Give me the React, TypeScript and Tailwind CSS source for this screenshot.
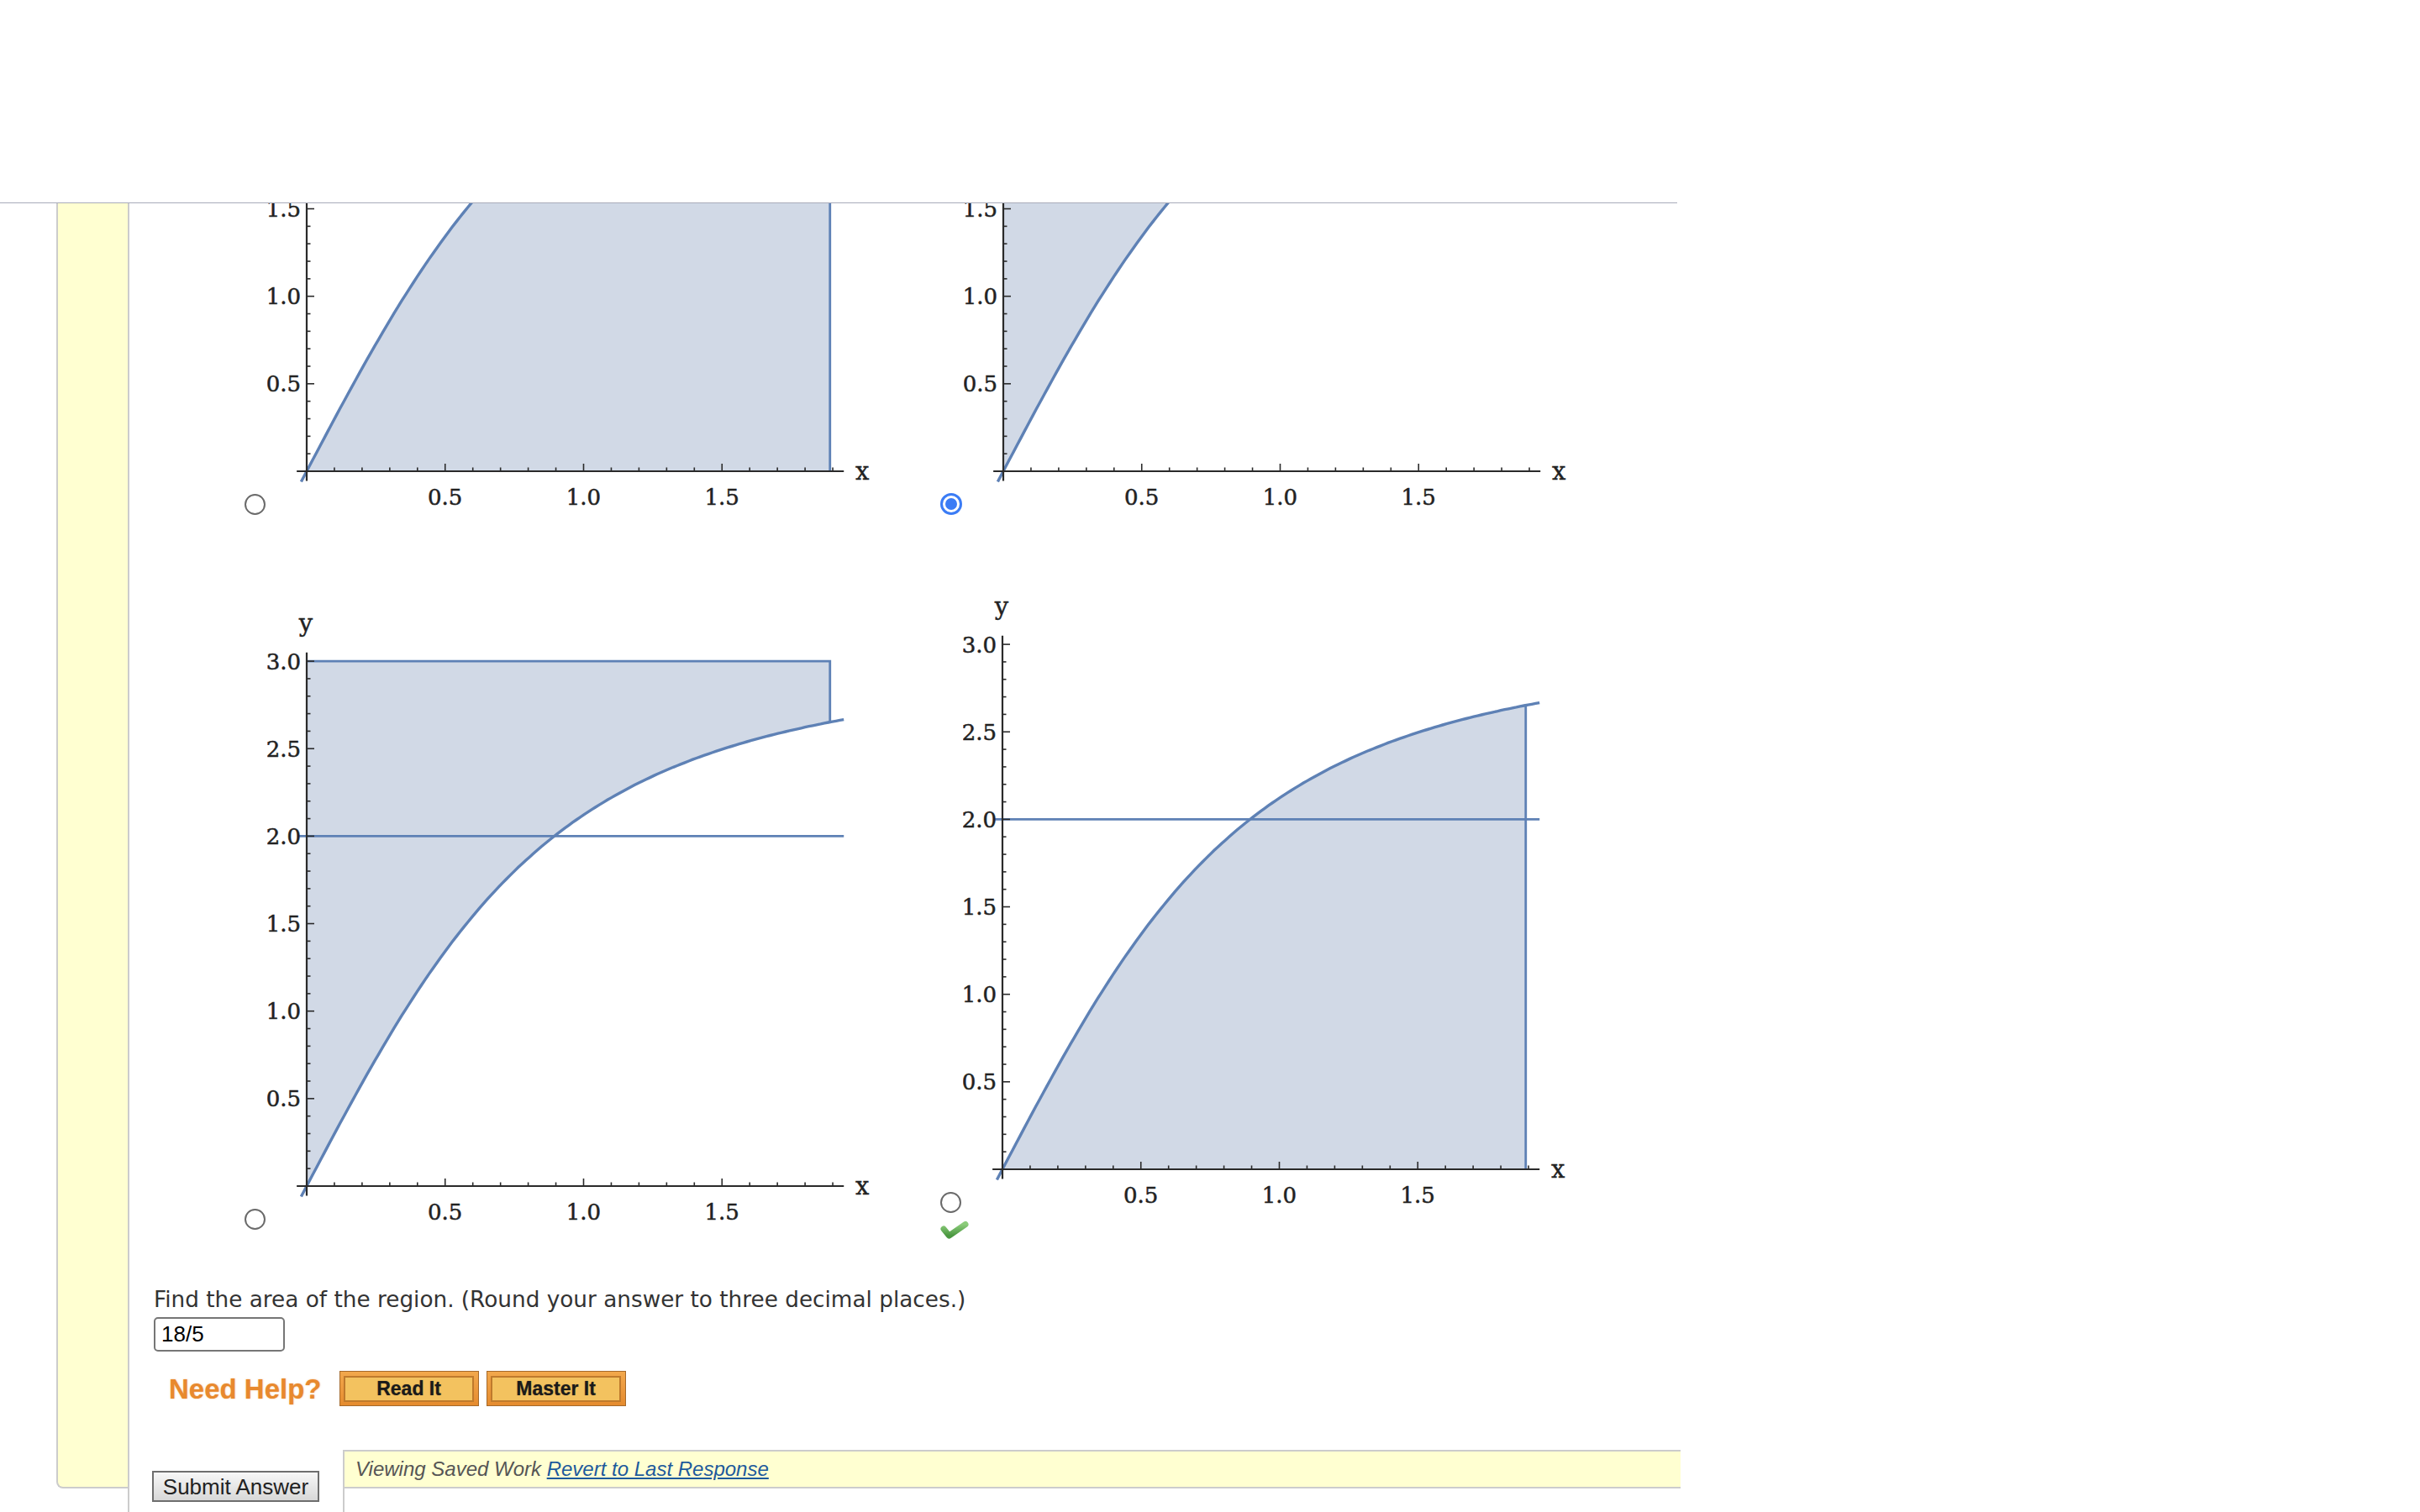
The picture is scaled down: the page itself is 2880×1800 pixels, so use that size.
import React from 'react';

// plot geometry, in image pixels
const W = 722;
const H = 748;
const OX = 47;
const OY = 696;
const UX = 329.5;
const UY = 208.3;
const XR = 1.89;
const BLUE = '#5e81b5';
const FILL = '#d1d9e6';

const f = (x: number) => (3 * x) / Math.sqrt(1 + x * x);
const px = (x: number) => OX + x * UX;
const py = (y: number) => OY - y * UY;

const curve = (a: number, b: number, n = 140) => {
    const out: string[] = [];
    for (let i = 0; i <= n; i++) {
        const x = a + ((b - a) * i) / n;
        out.push(`${px(x).toFixed(1)},${py(f(x)).toFixed(1)}`);
    }
    return out.join(' L');
};

type Variant = 'tl' | 'tr' | 'bl' | 'br';

const regionPath = (v: Variant) => {
    const o = `M${px(0)},${py(0)}`;
    if (v === 'tr') return `${o} L${curve(0, 2 / Math.sqrt(5))} L${px(0)},${py(2)} Z`;
    if (v === 'bl') return `${o} L${curve(0, XR)} L${px(XR)},${py(3)} L${px(0)},${py(3)} Z`;
    return `${o} L${curve(0, XR)} L${px(XR)},${py(0)} Z`;
};

const Plot: React.FC<{ variant: Variant }> = ({ variant }) => {
    const xTicks = Array.from({ length: 19 }, (_, i) => i + 1);
    const yTicks = Array.from({ length: 30 }, (_, i) => i + 1);
    const labelFont = { fontFamily: '"DejaVu Serif", serif' };

    return (
        <svg width={W} height={H} viewBox={`0 0 ${W} ${H}`} className="block shrink-0">
            <path d={regionPath(variant)} fill={FILL} />

            {/* boundary lines */}
            {(variant === 'bl' || variant === 'br') && (
                <line x1={px(-0.03)} y1={py(2)} x2={px(1.94)} y2={py(2)} stroke={BLUE} strokeWidth={2.8} />
            )}
            {variant === 'bl' && (
                <path
                    d={`M${px(0)},${py(3)} L${px(XR)},${py(3)} L${px(XR)},${py(f(XR))}`}
                    fill="none"
                    stroke={BLUE}
                    strokeWidth={2.8}
                />
            )}
            {(variant === 'tl' || variant === 'br') && (
                <line x1={px(XR)} y1={py(0)} x2={px(XR)} y2={py(f(XR))} stroke={BLUE} strokeWidth={2.8} />
            )}
            <path d={`M${curve(-0.02, 1.94)}`} fill="none" stroke={BLUE} strokeWidth={3.4} />

            {/* axes */}
            <line x1={px(-0.036)} y1={OY} x2={px(1.94)} y2={OY} stroke="#2a2a2a" strokeWidth={2.2} />
            <line x1={OX} y1={py(-0.055)} x2={OX} y2={py(3.05)} stroke="#2a2a2a" strokeWidth={2.2} />
            {xTicks.map((i) => {
                const len = i % 5 === 0 ? 9 : 4.5;
                return <line key={`x${i}`} x1={px(i / 10)} y1={OY} x2={px(i / 10)} y2={OY - len} stroke="#2a2a2a" strokeWidth={1.6} />;
            })}
            {yTicks.map((i) => {
                const len = i % 5 === 0 ? 9 : 4.5;
                return <line key={`y${i}`} x1={OX} y1={py(i / 10)} x2={OX + len} y2={py(i / 10)} stroke="#2a2a2a" strokeWidth={1.6} />;
            })}

            {/* tick labels */}
            {['0.5', '1.0', '1.5'].map((t) => (
                <text key={`lx${t}`} x={px(Number(t))} y={OY + 40} textAnchor="middle" fontSize={26} fill="#222" stroke="#222" strokeWidth={0.5} style={labelFont}>
                    {t}
                </text>
            ))}
            {['0.5', '1.0', '1.5', '2.0', '2.5', '3.0'].map((t) => (
                <text key={`ly${t}`} x={OX - 7} y={py(Number(t)) + 9.5} textAnchor="end" fontSize={26} fill="#222" stroke="#222" strokeWidth={0.5} style={labelFont}>
                    {t}
                </text>
            ))}
            <text x={px(1.94) + 22} y={OY + 10} textAnchor="middle" fontSize={29} fill="#222" stroke="#222" strokeWidth={0.4} style={labelFont}>
                x
            </text>
            <text x={OX - 1} y={OY - 660} textAnchor="middle" fontSize={29} fill="#222" stroke="#222" strokeWidth={0.4} style={labelFont}>
                y
            </text>
        </svg>
    );
};

const Radio: React.FC<{ checked?: boolean }> = ({ checked }) =>
    checked ? (
        <span className="flex h-[26px] w-[26px] shrink-0 items-center justify-center rounded-full border-[3px] border-[#3b7cf5] bg-white">
            <span className="h-[14px] w-[14px] rounded-full bg-[#3b7cf5]" />
        </span>
    ) : (
        <span className="block h-[25px] w-[25px] shrink-0 rounded-full border-2 border-[#6a6a6a] bg-white" />
    );

const Choice: React.FC<{ variant: Variant; checked?: boolean }> = ({ variant, checked }) => (
    <div className="flex items-end gap-[2px]">
        <Radio checked={checked} />
        <Plot variant={variant} />
    </div>
);

const CheckMark = () => (
    <svg width="36" height="40" viewBox="0 0 36 40" className="block">
        <defs>
            <linearGradient id="chk" x1="0" y1="0" x2="0" y2="1">
                <stop offset="0" stopColor="#8ccc7b" />
                <stop offset="1" stopColor="#4a9740" />
            </linearGradient>
        </defs>
        <path
            d="M4 19 L10.5 27 L30 13.5"
            fill="none"
            stroke="url(#chk)"
            strokeWidth="7"
            strokeLinejoin="round"
            strokeLinecap="round"
        />
    </svg>
);

const HelpButton: React.FC<{ label: string }> = ({ label }) => (
    <button className="h-[42px] w-[166px] border-[1.5px] border-[#a5692a] bg-gradient-to-b from-[#f2a84c] to-[#e58b2e] p-[4.5px]">
        <span className="flex h-full w-full items-center justify-center border-2 border-[#bf7a2c] bg-[#f3c25f] text-[23px] font-bold text-[#1a1a1a] [text-shadow:0_0_1px_rgba(0,0,0,0.5)]">
            {label}
        </span>
    </button>
);

const App: React.FC = () => {
    return (
        <div className="h-[1800px] w-[2880px] overflow-hidden bg-white font-['Liberation_Sans',Arial,sans-serif]">
            <div className="h-[242px] w-[1996px] border-b border-[#a9acba]" />

            <div className="flex h-[1558px] pl-[67px]">
                <div className="h-[1530px] w-[85px] rounded-bl-[8px] border-b-2 border-l-2 border-[#cccccc] bg-[#ffffd1]" />

                <main className="h-full w-[1848px] overflow-hidden border-l-2 border-[#cccccc] pl-[29px]">
                    {/* answer choices, scrolled partly out of view */}
                    <div className="-mt-[377px] ml-[108px] grid grid-cols-[828px_828px] items-center gap-y-[82.5px]">
                        <Choice variant="tl" />
                        <Choice variant="tr" checked />
                        <Choice variant="bl" />
                        <div className="flex flex-col">
                            <Choice variant="br" />
                            <CheckMark />
                        </div>
                    </div>

                    <p className="mt-[48px] font-['DejaVu_Sans',Verdana,sans-serif] text-[26.3px] leading-[30px] text-[#333]">
                        Find the area of the region. (Round your answer to three decimal places.)
                    </p>
                    <input
                        readOnly
                        value="18/5"
                        className="mt-[6px] block h-[41px] w-[156px] rounded-[5px] border-2 border-[#767676] pl-[7px] text-[26px] text-black outline-none"
                    />

                    <div className="mt-[20px] flex items-center">
                        <span className="ml-[18px] text-[33px] font-bold text-[#e8892e] [text-shadow:0_0_2px_rgba(232,137,46,0.55)]">
                            Need Help?
                        </span>
                        <div className="ml-[21px] flex gap-[9px]">
                            <HelpButton label="Read It" />
                            <HelpButton label="Master It" />
                        </div>
                    </div>

                    <div className="mt-[48px] flex items-start">
                        <button className="-ml-[2px] mt-[25px] h-[37px] w-[199px] border-2 border-[#6e6e6e] bg-gradient-to-b from-[#f7f7f7] to-[#d8d8d8] text-[26px] leading-none text-[#222]">
                            Submit Answer
                        </button>
                        <div className="ml-[28px] h-[200px] flex-1 border-l-2 border-t-2 border-[#cccccc]">
                            <div className="flex h-[44px] items-center border-b-2 border-[#cccccc] bg-[#ffffd1] pl-[13px] text-[24px] italic text-[#555]">
                                Viewing Saved Work&nbsp;
                                <a className="text-[#1d5a9c] underline">Revert to Last Response</a>
                            </div>
                        </div>
                    </div>
                </main>
            </div>
        </div>
    );
};

export default App;
